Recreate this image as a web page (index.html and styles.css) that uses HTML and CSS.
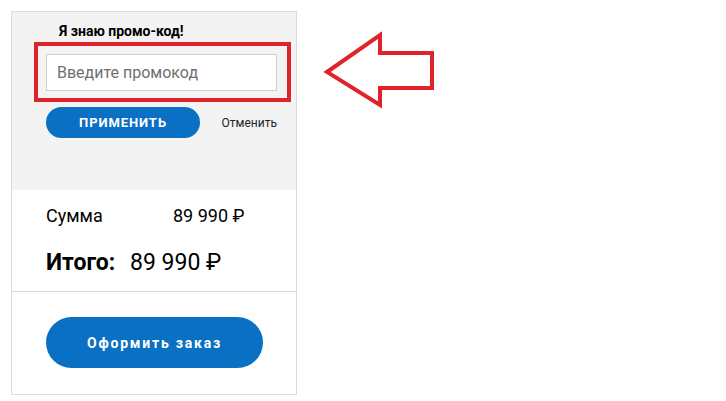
FILE: index.html
```html
<!DOCTYPE html>
<html lang="ru">
<head>
  <meta charset="UTF-8">
  <title>Корзина</title>
  <link rel="stylesheet" href="styles.css">
</head>
<body>

<div class="page">
  <div class="cart">
    <div class="promo">
      <div class="promo-title">Я знаю промо-код!</div>
      <div class="highlight">
        <input class="promo-input" type="text" placeholder="Введите промокод">
      </div>
      <div class="promo-actions">
        <button class="btn-apply">ПРИМЕНИТЬ</button>
        <a class="cancel" href="#">Отменить</a>
      </div>
    </div>

    <div class="totals">
      <div class="row row-sum">
        <span class="label">Сумма</span>
        <span class="value">89 990 ₽</span>
      </div>
      <div class="row row-total">
        <span class="label">Итого:</span>
        <span class="value">89 990 ₽</span>
      </div>
    </div>

    <div class="checkout">
      <button class="btn-order">Оформить заказ</button>
    </div>
  </div>

  <svg class="pointer" width="120" height="80" viewBox="320 30 120 80">
    <polygon points="327,72 380,35 380,53 432,53 432,88 380,88 380,105"
             fill="none" stroke="#e0232b" stroke-width="4" stroke-linejoin="miter"/>
  </svg>
</div>

</body>
</html>
```

FILE: styles.css
```css
* { box-sizing: border-box; }
body {
  margin: 0;
  background: #fff;
  color: #000;
  font-family: Roboto, "Noto Sans", Arial, sans-serif;
}
.page {
  position: relative;
  padding: 11px;
  min-height: 401px;
}
.cart {
  width: 286px;
  border: 1px solid #dcdcdc;
  background: #fff;
}
.promo {
  height: 178px;
  background: #f3f3f3;
  padding: 11px 19px 0 34px;
}
.promo-title {
  margin-left: 13px;
  font-size: 14px;
  font-weight: bold;
  line-height: 16px;
}
.highlight {
  margin: 3px -14px 0 -12px;
  border: 4px solid #e0232b;
  padding: 8px 10px 7px 8px;
}
.promo-input {
  display: block;
  width: 100%;
  height: 37px;
  border: 1px solid #cfcfcf;
  background: #fff;
  padding: 0 10px;
  font-family: inherit;
  font-size: 16px;
  outline: none;
}
.promo-input::placeholder {
  color: #6f6f6f;
}
.promo-actions {
  display: flex;
  justify-content: space-between;
  align-items: center;
  margin-top: 5px;
}
.btn-apply {
  width: 154px;
  height: 31px;
  border: none;
  border-radius: 16px;
  background: #0a70c4;
  color: #fff;
  font-family: inherit;
  font-size: 13px;
  font-weight: bold;
  letter-spacing: 0.9px;
  cursor: pointer;
}
.cancel {
  font-size: 12px;
  color: #222;
  text-decoration: none;
}
.totals {
  padding: 14px 19px 13px 34px;
  border-bottom: 1px solid #dcdcdc;
}
.row {
  display: flex;
  align-items: center;
}
.row-sum {
  font-size: 18px;
  line-height: 24px;
}
.row-sum .label {
  width: 127px;
}
.row-total {
  margin-top: 20px;
  line-height: 30px;
}
.row-total .label {
  flex: none;
  width: 84px;
  font-size: 23px;
  font-weight: bold;
}
.row-total .value {
  font-size: 23px;
}
.checkout {
  padding: 25px 19px 26px 34px;
}
.btn-order {
  width: 217px;
  height: 51px;
  border: none;
  border-radius: 26px;
  background: #0a70c4;
  color: #fff;
  font-family: inherit;
  font-size: 14px;
  font-weight: bold;
  letter-spacing: 1.8px;
  cursor: pointer;
}
.pointer {
  position: absolute;
  left: 320px;
  top: 30px;
}
```
